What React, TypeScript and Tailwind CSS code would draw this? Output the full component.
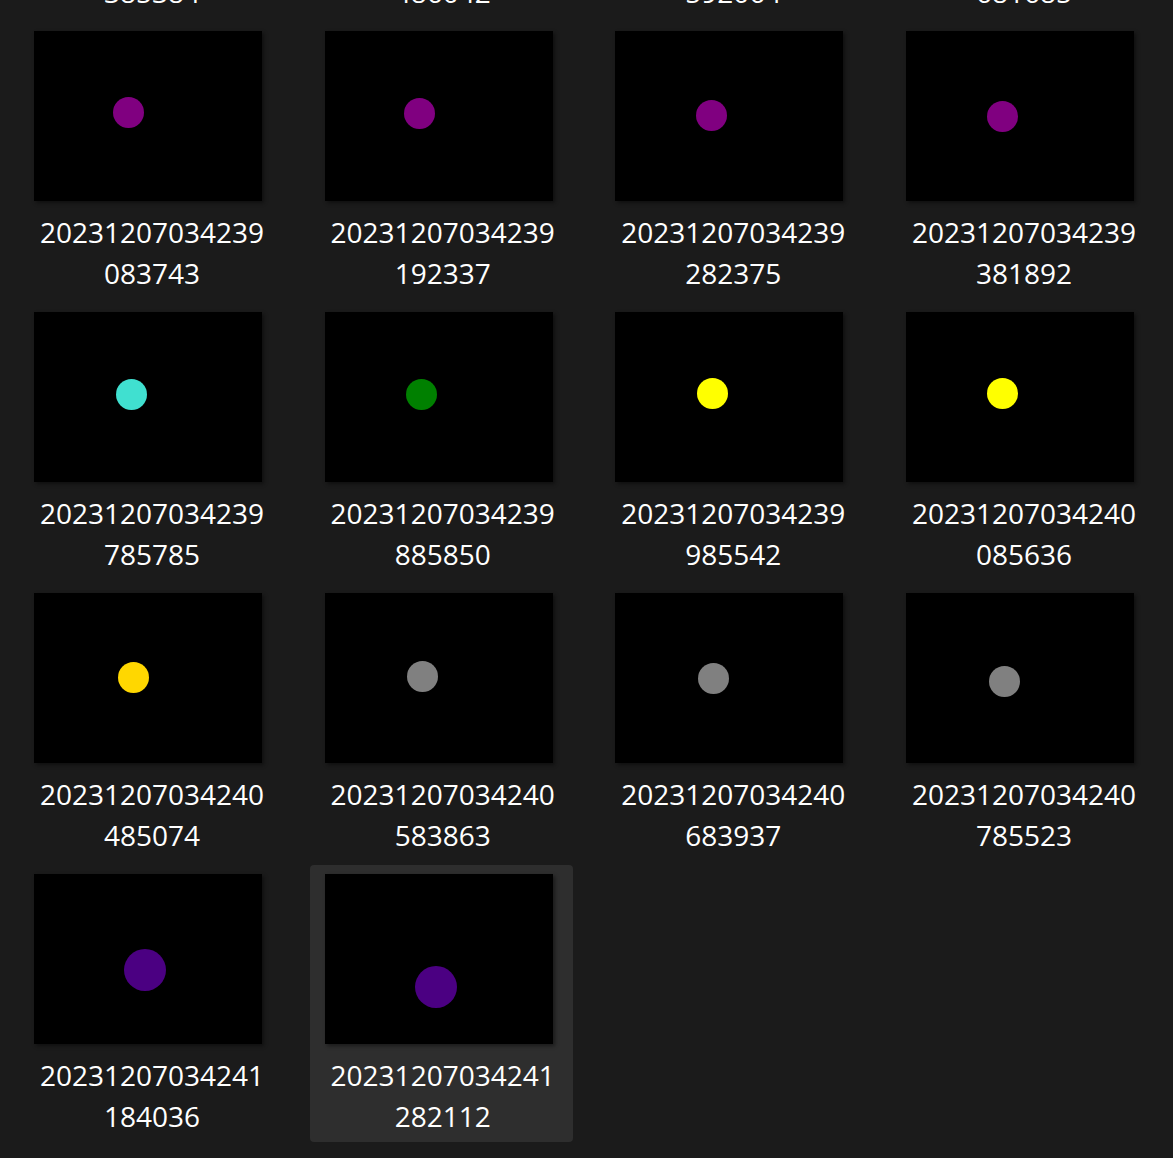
type Item = {
  top: string;
  bottom: string;
  color?: string;
  x?: number;
  y?: number;
  size?: number;
  selected?: boolean;
};

const items: Item[] = [
  { top: "20231207034238", bottom: "385384" },
  { top: "20231207034238", bottom: "486042" },
  { top: "20231207034238", bottom: "592064" },
  { top: "20231207034238", bottom: "681685" },
  { top: "20231207034239", bottom: "083743", color: "#800080", x: 94, y: 81, size: 31 },
  { top: "20231207034239", bottom: "192337", color: "#800080", x: 95, y: 82, size: 31 },
  { top: "20231207034239", bottom: "282375", color: "#800080", x: 96, y: 84, size: 31 },
  { top: "20231207034239", bottom: "381892", color: "#800080", x: 97, y: 85, size: 31 },
  { top: "20231207034239", bottom: "785785", color: "#40e0d0", x: 97, y: 82, size: 31 },
  { top: "20231207034239", bottom: "885850", color: "#008000", x: 97, y: 82, size: 31 },
  { top: "20231207034239", bottom: "985542", color: "#ffff00", x: 97, y: 81, size: 31 },
  { top: "20231207034240", bottom: "085636", color: "#ffff00", x: 97, y: 81, size: 31 },
  { top: "20231207034240", bottom: "485074", color: "#ffd700", x: 99, y: 84, size: 31 },
  { top: "20231207034240", bottom: "583863", color: "#808080", x: 98, y: 83, size: 31 },
  { top: "20231207034240", bottom: "683937", color: "#808080", x: 98, y: 85, size: 31 },
  { top: "20231207034240", bottom: "785523", color: "#808080", x: 99, y: 88, size: 31 },
  { top: "20231207034241", bottom: "184036", color: "#4b0082", x: 111, y: 96, size: 42 },
  { top: "20231207034241", bottom: "282112", color: "#4b0082", x: 111, y: 113, size: 42, selected: true },
];

function Tile({ item }: { item: Item }) {
  return (
    <div
      className={
        "h-[277px] w-[263px] rounded-[4px] pt-[9px] " +
        (item.selected ? "bg-[#2e2e2e]" : "")
      }
    >
      <div className="pl-[15px]">
        <div className="relative h-[170px] w-[228px] bg-black shadow-[2px_2px_4px_rgba(0,0,0,0.45)]">
          {item.color && (
            <div
              className="absolute rounded-full"
              style={{
                backgroundColor: item.color,
                width: item.size,
                height: item.size,
                left: (item.x ?? 0) - (item.size ?? 0) / 2,
                top: (item.y ?? 0) - (item.size ?? 0) / 2,
              }}
            />
          )}
        </div>
      </div>
      <div className="mt-[11px] pl-[3px] text-center text-[28px] leading-[41px] text-white">
        <div>{item.top}</div>
        <div>{item.bottom}</div>
      </div>
    </div>
  );
}

export default function App() {
  return (
    <div
      className="h-[1158px] w-[1173px] overflow-hidden bg-[#1b1b1b]"
      style={{ fontFamily: '"Open Sans", "Noto Sans", sans-serif' }}
    >
      <div className="-mt-[259px] grid grid-cols-[repeat(4,263px)] gap-x-[27.67px] gap-y-[4px] px-[19px]">
        {items.map((item, i) => (
          <Tile key={i} item={item} />
        ))}
      </div>
    </div>
  );
}
